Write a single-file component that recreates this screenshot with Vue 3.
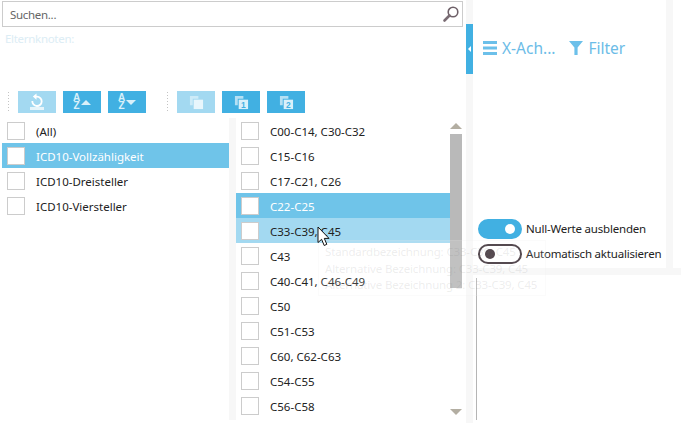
<template>
  <div class="page">
    <div class="slicer">
      <div class="search">
        <span class="search-text">Suchen...</span>
        <svg class="search-icon" width="18" height="18" viewBox="0 0 18 18">
          <circle cx="11" cy="7" r="4.8" fill="none" stroke="#6e6068" stroke-width="1.6" />
          <path d="M7.5 10.5 L2.5 15.5" stroke="#7a6c74" stroke-width="2.6" stroke-linecap="round" />
        </svg>
      </div>
      <div class="crumb">Elternknoten:</div>

      <div class="toolbar">
        <span class="grip"></span>
        <button class="tool off">
          <svg width="22" height="18" viewBox="0 0 22 18">
            <path d="M6.3 8 A4.7 4.7 0 1 0 11 3.6 L9 3.6" fill="none" stroke="#fff" stroke-width="1.8" />
            <path d="M10.5 0.4 L10.5 6.8 L6.8 3.6 Z" fill="#fff" />
            <rect x="4" y="14" width="14" height="3" fill="#e6f5fb" />
          </svg>
        </button>
        <button class="tool">
          <span class="az"><b>A</b><b>Z</b></span><i class="tri up"></i>
        </button>
        <button class="tool">
          <span class="az"><b>A</b><b>Z</b></span><i class="tri down"></i>
        </button>
        <span class="grip second"></span>
        <button class="tool off">
          <svg width="15" height="15" viewBox="0 0 16 16">
            <path d="M1 1 H10 V4 H4 V11 H1 Z" fill="#cdebf8" />
            <rect x="5" y="5" width="10" height="10" fill="#e8f6fc" />
          </svg>
        </button>
        <button class="tool">
          <svg width="15" height="15" viewBox="0 0 16 16">
            <path d="M1 1 H10 V4 H4 V11 H1 Z" fill="#b5e0f4" />
            <rect x="5" y="5" width="10" height="10" fill="#d9f0fa" />
            <text x="10" y="13.6" class="digit">1</text>
          </svg>
        </button>
        <button class="tool">
          <svg width="15" height="15" viewBox="0 0 16 16">
            <path d="M1 1 H10 V4 H4 V11 H1 Z" fill="#b5e0f4" />
            <rect x="5" y="5" width="10" height="10" fill="#d9f0fa" />
            <text x="10" y="13.6" class="digit">2</text>
          </svg>
        </button>
      </div>

      <div class="lists">
        <div class="list left-list">
          <div
            v-for="item in leftItems"
            :key="item"
            class="row"
            :class="{ selected: item === 'ICD10-Vollzähligkeit' }"
          >
            <span class="check"></span>
            <span class="label">{{ item }}</span>
          </div>
        </div>
        <div class="splitter"></div>
        <div class="list right-list">
          <div
            v-for="item in rightItems"
            :key="item"
            class="row"
            :class="{ selected: item === 'C22-C25', hovered: item === 'C33-C39, C45' }"
          >
            <span class="check"></span>
            <span class="label">{{ item }}</span>
          </div>
        </div>
        <div class="scrollbar">
          <i class="arrow top"></i>
          <div class="thumb"></div>
          <i class="arrow bottom"></i>
        </div>
      </div>
    </div>

    <div class="gutter">
      <div class="handle"><i></i></div>
    </div>

    <div class="side">
      <div class="side-top">
        <div class="panel">
          <div class="tabs">
            <span class="tab">
              <svg width="14" height="14" viewBox="0 0 14 14">
                <path d="M0 0 H14 V3 H0 Z M0 5.5 H14 V8.5 H0 Z M0 11 H14 V14 H0 Z" fill="#6cc0ea" />
              </svg>
              <span>X-Ach...</span>
            </span>
            <span class="tab">
              <svg width="14" height="14" viewBox="0 0 14 14">
                <path d="M0 0 H14 L8.6 6.5 V14 H5.4 V6.5 Z" fill="#6cc0ea" />
              </svg>
              <span>Filter</span>
            </span>
          </div>
          <div class="toggles">
            <div class="toggle-row">
              <span class="toggle on"><i></i></span>
              <span>Null-Werte ausblenden</span>
            </div>
            <div class="toggle-row">
              <span class="toggle"><i></i></span>
              <span>Automatisch aktualisieren</span>
            </div>
          </div>
        </div>
        <div class="band"></div>
      </div>
      <div class="side-rule"></div>
      <div class="side-bottom">
        <div class="axis"></div>
      </div>
    </div>

    <div class="tooltip">
      <div>Standardbezeichnung: C33-C39, C45</div>
      <div>Alternative Bezeichnung: C33-C39, C45</div>
      <div>Alternative Bezeichnung 2: C33-C39, C45</div>
    </div>

    <svg class="cursor" width="14" height="21" viewBox="0 0 14 21">
      <path d="M1 1 V16.5 L4.6 13.3 L7.2 19.5 L9.8 18.3 L7.3 12.4 H12 Z" fill="#fff" stroke="#111" stroke-width="1" />
    </svg>
  </div>
</template>

<script setup>
const leftItems = ['(All)', 'ICD10-Vollzähligkeit', 'ICD10-Dreisteller', 'ICD10-Viersteller']

const rightItems = [
  'C00-C14, C30-C32',
  'C15-C16',
  'C17-C21, C26',
  'C22-C25',
  'C33-C39, C45',
  'C43',
  'C40-C41, C46-C49',
  'C50',
  'C51-C53',
  'C60, C62-C63',
  'C54-C55',
  'C56-C58',
]
</script>

<style>
html,
body {
  margin: 0;
  background: #fff;
}
</style>

<style scoped>
.page {
  position: relative;
  display: flex;
  width: 681px;
  height: 425px;
  overflow: hidden;
  background: #fff;
  color: #222;
  font-family: "Noto Sans", "Open Sans", sans-serif;
  font-size: 11.5px;
}

.slicer {
  width: 464px;
  padding: 1px 0 0 2px;
}

.search {
  display: flex;
  align-items: center;
  justify-content: space-between;
  box-sizing: border-box;
  width: 461px;
  height: 26px;
  padding: 0 2px 0 7px;
  border: 1px solid #ccc;
}

.search-text {
  color: #666;
  letter-spacing: -0.3px;
}

.crumb {
  height: 17px;
  margin-top: 3px;
  padding-left: 3px;
  color: #dcedf5;
  line-height: 17px;
  letter-spacing: -0.3px;
}

.toolbar {
  display: flex;
  align-items: center;
  height: 22px;
  margin-top: 44px;
  padding-left: 5px;
}

.grip {
  width: 3px;
  height: 22px;
  margin-right: 8px;
  background-image: radial-gradient(#c4c4c4 0.8px, transparent 0.9px);
  background-size: 3px 3px;
}

.grip.second {
  margin-left: 13px;
  margin-right: 8px;
}

.tool {
  display: flex;
  align-items: center;
  justify-content: center;
  width: 38px;
  height: 22px;
  margin-right: 7px;
  padding: 0;
  border: none;
  background: #41b0e2;
}

.tool.off {
  background: #a3d9f1;
}

.digit {
  fill: #41b0e2;
  font-family: "Liberation Sans", sans-serif;
  font-size: 9px;
  font-weight: 700;
  text-anchor: middle;
}

.az {
  display: flex;
  flex-direction: column;
  margin-right: 1px;
  color: #d9f0fa;
  font-family: "Liberation Sans", sans-serif;
  font-size: 10px;
  line-height: 8px;
}

.az b {
  display: block;
}

.tri {
  width: 0;
  height: 0;
  border-left: 5px solid transparent;
  border-right: 5px solid transparent;
}

.tri.up {
  border-bottom: 5px solid #d9f0fa;
}

.tri.down {
  border-top: 5px solid #d9f0fa;
}

.lists {
  display: flex;
  height: 302px;
  margin-top: 5px;
}

.left-list {
  width: 227px;
}

.right-list {
  width: 214px;
}

.splitter {
  width: 7px;
  background: #f7f7f7;
}

.row {
  display: flex;
  align-items: center;
  gap: 11px;
  height: 25px;
  padding-left: 5px;
  white-space: nowrap;
}

.label {
  padding-top: 1px;
}

.row.selected {
  background: #6fc4e9;
  color: #fff;
}

.row.hovered {
  background: #a3d9f1;
}

.check {
  box-sizing: border-box;
  flex: none;
  width: 18px;
  height: 18px;
  border: 1px solid #ccc;
  background: #fff;
}

.scrollbar {
  display: flex;
  flex-direction: column;
  align-items: center;
  box-sizing: border-box;
  width: 12px;
  height: 297px;
  padding-top: 5px;
}

.arrow {
  width: 0;
  height: 0;
  border-left: 6px solid transparent;
  border-right: 6px solid transparent;
}

.arrow.top {
  border-bottom: 6px solid #b3aea2;
}

.arrow.bottom {
  margin-top: auto;
  border-top: 6px solid #b3aea2;
}

.thumb {
  width: 12px;
  height: 154px;
  margin-top: 5px;
  background: #b9b9b9;
}

.gutter {
  flex: none;
  width: 7px;
  height: 423px;
  padding-top: 24px;
  box-sizing: border-box;
  background: #f7f7f7;
}

.handle {
  display: flex;
  align-items: center;
  height: 50px;
  padding-left: 2px;
  background: #41b0e2;
}

.handle i {
  width: 0;
  height: 0;
  border-top: 3px solid transparent;
  border-bottom: 3px solid transparent;
  border-right: 3px solid #fff;
}

.side {
  flex: 1;
  min-width: 0;
}

.side-top {
  display: flex;
  height: 268px;
}

.panel {
  width: 193px;
  padding-top: 37px;
  box-sizing: border-box;
}

.tabs {
  display: flex;
  align-items: center;
  gap: 14px;
  height: 22px;
  padding-left: 10px;
  color: #6cbce7;
  font-size: 15.5px;
}

.tab {
  display: flex;
  align-items: center;
  gap: 5px;
}

.toggles {
  margin-top: 157px;
  padding-left: 5px;
  white-space: nowrap;
  letter-spacing: -0.2px;
}

.toggle-row {
  display: flex;
  align-items: center;
  gap: 4px;
  height: 25px;
}

.toggle {
  box-sizing: border-box;
  display: flex;
  flex: none;
  align-items: center;
  width: 44px;
  height: 20px;
  padding-left: 5px;
  border: 2px solid #3e3138;
  border-radius: 10px;
  background: #fff;
}

.toggle i {
  width: 10px;
  height: 10px;
  border-radius: 50%;
  background: #3e3138;
}

.toggle.on {
  justify-content: flex-end;
  padding: 0 5px 0 0;
  border-color: #41b0e2;
  background: #41b0e2;
}

.toggle.on i {
  background: #fff;
}

.band {
  width: 7px;
  background: #f7f7f7;
}

.side-rule {
  height: 7px;
  background: #f7f7f7;
}

.side-bottom {
  padding: 3px 0 0 3px;
}

.axis {
  width: 1px;
  height: 142px;
  background: #b5b5b5;
}

.tooltip {
  position: absolute;
  left: 318px;
  top: 240px;
  box-sizing: border-box;
  width: 228px;
  height: 56px;
  padding: 3px 6px;
  border: 1px solid rgba(230, 230, 230, 0.15);
  background: rgba(255, 255, 255, 0.12);
  color: rgba(120, 120, 120, 0.14);
  line-height: 16.5px;
  letter-spacing: -0.15px;
  white-space: nowrap;
  overflow: hidden;
}

.cursor {
  position: absolute;
  left: 317px;
  top: 226px;
}
</style>
